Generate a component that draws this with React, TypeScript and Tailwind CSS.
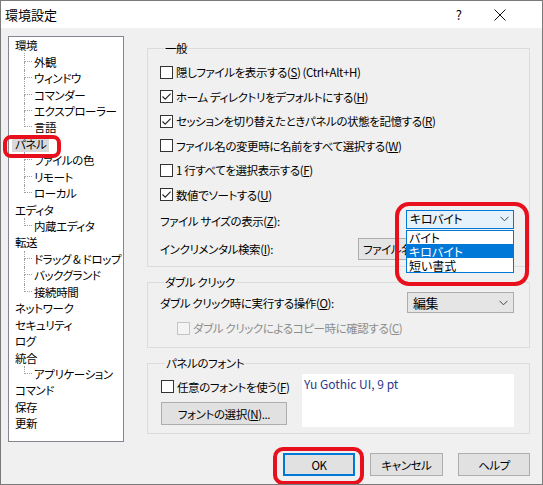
import React from "react";

type Node = { t: string; l: 0 | 1; last?: boolean; sel?: boolean };

const tree: Node[] = [
  { t: "環境", l: 0 },
  { t: "外観", l: 1 },
  { t: "ウィンドウ", l: 1 },
  { t: "コマンダー", l: 1 },
  { t: "エクスプローラー", l: 1 },
  { t: "言語", l: 1, last: true },
  { t: "パネル", l: 0, sel: true },
  { t: "ファイルの色", l: 1 },
  { t: "リモート", l: 1 },
  { t: "ローカル", l: 1, last: true },
  { t: "エディタ", l: 0 },
  { t: "内蔵エディタ", l: 1, last: true },
  { t: "転送", l: 0 },
  { t: "ドラッグ & ドロップ", l: 1 },
  { t: "バックグランド", l: 1 },
  { t: "接続時間", l: 1, last: true },
  { t: "ネットワーク", l: 0 },
  { t: "セキュリティ", l: 0 },
  { t: "ログ", l: 0 },
  { t: "統合", l: 0 },
  { t: "アプリケーション", l: 1, last: true },
  { t: "コマンド", l: 0 },
  { t: "保存", l: 0 },
  { t: "更新", l: 0 },
];

function Check({ checked, disabled }: { checked?: boolean; disabled?: boolean }) {
  return (
    <div
      className={
        "w-[13px] h-[13px] shrink-0 border flex items-center justify-center " +
        (disabled ? "border-[#c4c4c4] bg-[#f4f4f4]" : "border-[#333333] bg-white")
      }
    >
      {checked && (
        <svg width="11" height="11" viewBox="0 0 11 11">
          <path d="M1.5 5.5 L4.2 8.2 L9.6 2.6" fill="none" stroke="#222" strokeWidth="1.1" />
        </svg>
      )}
    </div>
  );
}

function Chevron() {
  return (
    <svg width="9" height="6" viewBox="0 0 9 6">
      <path d="M0.5 0.8 L4.5 4.8 L8.5 0.8" fill="none" stroke="#444" strokeWidth="1" />
    </svg>
  );
}

function M({ c }: { c: string }) {
  return (
    <span>
      (<span className="underline underline-offset-[1px]">{c}</span>)
    </span>
  );
}

function CheckRow({ checked, children }: { checked?: boolean; children: React.ReactNode }) {
  return (
    <div className="h-[24.5px] flex items-center gap-[3px]">
      <Check checked={checked} />
      <span className="leading-[16px] whitespace-nowrap">{children}</span>
    </div>
  );
}

function Legend({ children }: { children: React.ReactNode }) {
  return <legend className="ml-[4px] px-[1px] leading-[16px] text-black">{children}</legend>;
}

export default function App() {
  return (
    <div className="relative w-[543px] h-[485px] border border-[#7a7a7a] bg-[#f0f0f0] flex flex-col text-[11.5px] tracking-[-0.4px] text-black font-['Noto_Sans_CJK_JP',sans-serif] [font-feature-settings:'palt'] overflow-hidden">
      {/* title bar */}
      <div className="h-[27px] bg-white flex items-center shrink-0 tracking-normal">
        <span className="ml-[4px] text-[13px] leading-[16px]">環境設定</span>
        <div className="ml-auto flex items-center">
          <span className="text-[13px] leading-[16px] mr-[32px]">?</span>
          <svg width="12" height="12" viewBox="0 0 12 12" className="mr-[36px]">
            <path d="M0.5 0.5 L11.5 11.5 M11.5 0.5 L0.5 11.5" stroke="#111" strokeWidth="1" />
          </svg>
        </div>
      </div>

      {/* main */}
      <div className="flex pl-[7px] pt-[8px]">
        {/* tree */}
        <div className="w-[116px] h-[406px] border border-[#828790] bg-white shrink-0 overflow-hidden">
          {tree.map((n, i) =>
            n.l === 0 ? (
              <div key={i} className="h-[16.45px] flex items-center">
                <span
                  className={
                    "leading-[16px] " +
                    (n.sel ? "ml-[3px] px-[3px] bg-[#d9d9d9]" : "ml-[6px]")
                  }
                >
                  {n.t}
                </span>
              </div>
            ) : (
              <div key={i} className="h-[16.45px] flex items-stretch">
                <div className="ml-[15px] w-[8px] flex flex-col shrink-0">
                  <div className="h-1/2 border-l border-b border-dotted border-[#a0a0a0]" />
                  <div className={"h-1/2 " + (n.last ? "" : "border-l border-dotted border-[#a0a0a0]")} />
                </div>
                <span className="ml-[2px] leading-[16px] self-center whitespace-nowrap">{n.t}</span>
              </div>
            )
          )}
        </div>

        {/* right column */}
        <div className="ml-[23px] w-[383px] pt-[4px] flex flex-col">
          {/* 一般 */}
          <fieldset className="border border-[#dcdcdc] pl-[12px] pr-[15px] pt-[4px] pb-[4px]">
            <Legend>一般</Legend>
            <CheckRow>
              隠しファイルを表示する<M c="S" /> (Ctrl+Alt+H)
            </CheckRow>
            <CheckRow checked>
              ホーム ディレクトリをデフォルトにする<M c="H" />
            </CheckRow>
            <CheckRow checked>
              セッションを切り替えたときパネルの状態を記憶する<M c="R" />
            </CheckRow>
            <CheckRow>
              ファイル名の変更時に名前をすべて選択する<M c="W" />
            </CheckRow>
            <CheckRow>
              1 行すべてを選択表示する<M c="F" />
            </CheckRow>
            <CheckRow checked>
              数値でソートする<M c="U" />
            </CheckRow>
            <div className="h-[28px] flex items-center justify-between">
              <span className="leading-[16px]">
                ファイル サイズの表示<M c="Z" />:
              </span>
              <div className="w-[108px] h-[19px] border border-[#0078d7] bg-[#e5f1fb] flex items-center pl-[3px] pr-[4px] mt-[-4px] text-[12px]">
                <span className="leading-[16px]">キロバイト</span>
                <span className="ml-auto flex">
                  <Chevron />
                </span>
              </div>
            </div>
            <div className="h-[27px] flex items-center justify-between">
              <span className="leading-[16px]">
                インクリメンタル検索<M c="I" />:
              </span>
              <div className="w-[156px] h-[22px] border border-[#adadad] bg-[#e5e5e5] flex items-center pl-[4px] pr-[4px] overflow-hidden">
                <span className="leading-[16px] whitespace-nowrap">ファイル名</span>
                <span className="ml-auto flex">
                  <Chevron />
                </span>
              </div>
            </div>
          </fieldset>

          {/* ダブル クリック */}
          <fieldset className="mt-[7px] border border-[#dcdcdc] pl-[12px] pr-[15px] pt-0 pb-[6px]">
            <Legend>ダブル クリック</Legend>
            <div className="h-[25px] flex items-center justify-between">
              <span className="leading-[16px]">
                ダブル クリック時に実行する操作<M c="O" />:
              </span>
              <div className="w-[107px] h-[21px] border border-[#adadad] bg-[#e5e5e5] flex items-center pl-[5px] pr-[5px]">
                <span className="leading-[16px] text-[13px]">編集</span>
                <span className="ml-auto flex">
                  <Chevron />
                </span>
              </div>
            </div>
            <div className="h-[26px] flex items-center gap-[3px] pl-[17px]">
              <Check disabled />
              <span className="leading-[16px] text-[#8d8d8d]">
                ダブル クリックによるコピー時に確認する<M c="C" />
              </span>
            </div>
          </fieldset>

          {/* パネルのフォント */}
          <fieldset className="mt-[7px] border border-[#dcdcdc] pl-[13px] pr-[15px] pt-[3px] pb-[6px]">
            <Legend>パネルのフォント</Legend>
            <div className="flex">
              <div className="w-[141px] flex flex-col">
                <div className="h-[25px] flex items-center gap-[3px]">
                  <Check />
                  <span className="leading-[16px]">
                    任意のフォントを使う<M c="F" />
                  </span>
                </div>
                <div className="mt-[3px] w-[126px] h-[23px] border border-[#adadad] bg-[#e1e1e1] flex items-center justify-center">
                  <span className="leading-[16px]">
                    フォントの選択<M c="N" />...
                  </span>
                </div>
              </div>
              <div className="w-[212px] h-[53px] bg-white pl-[2px] pt-[1px] text-[12px] tracking-normal">
                <span className="leading-[16px] text-[#2b3a8c]">Yu Gothic UI, 9 pt</span>
              </div>
            </div>
          </fieldset>
        </div>
      </div>

      {/* buttons */}
      <div className="mt-[11px] flex justify-end gap-[15px] pr-[12px]">
        <div className="w-[72px] h-[23px] border-2 border-[#0078d7] bg-[#e1e1e1] flex items-center justify-center">
          <span className="leading-[16px]">OK</span>
        </div>
        <div className="w-[73px] h-[23px] border border-[#adadad] bg-[#e1e1e1] flex items-center justify-center">
          <span className="leading-[16px]">キャンセル</span>
        </div>
        <div className="w-[72px] h-[23px] border border-[#adadad] bg-[#e1e1e1] flex items-center justify-center">
          <span className="leading-[16px]">ヘルプ</span>
        </div>
      </div>

      {/* dropdown list overlay */}
      <div className="absolute left-[405px] top-[229px] w-[108px] h-[43px] border border-[#0078d7] bg-white flex flex-col text-[12px] tracking-normal">
        <div className="h-[13px] flex items-center pl-[2px] leading-[13px]">バイト</div>
        <div className="h-[14px] flex items-center pl-[2px] leading-[13px] bg-[#0078d7] text-white">キロバイト</div>
        <div className="h-[14px] flex items-center pl-[2px] leading-[13px]">短い書式</div>
      </div>

      {/* red annotations */}
      <div className="absolute left-[2px] top-[134px] w-[58px] h-[23px] border-[4px] border-[#e8101c] rounded-[8px]" />
      <div className="absolute left-[394px] top-[201px] w-[134px] h-[84px] border-[4px] border-[#e8101c] rounded-[14px]" />
      <div className="absolute left-[272px] top-[446px] w-[91px] h-[38px] border-[4px] border-[#e8101c] rounded-[10px]" />
    </div>
  );
}
